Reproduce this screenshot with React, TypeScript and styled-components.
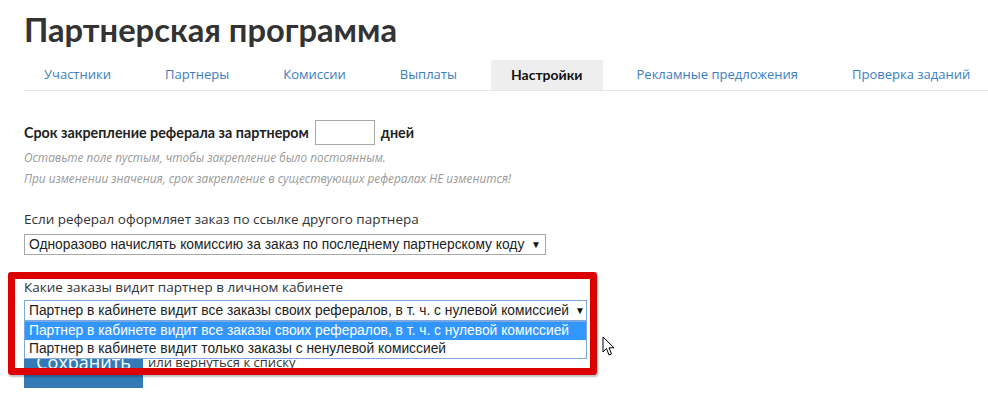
import React from 'react';
import styled, { createGlobalStyle } from 'styled-components';

const GlobalStyle = createGlobalStyle`
  html, body {
    margin: 0;
    padding: 0;
    background: #fff;
  }
  body {
    font-family: 'Open Sans', 'Liberation Sans', sans-serif;
    color: #333;
  }
`;

const Page = styled.div`
  position: relative;
  width: 988px;
  height: 405px;
  overflow: hidden;
  padding-left: 24px;
  box-sizing: border-box;
`;

const Title = styled.h1`
  margin: 0;
  padding-top: 11px;
  font-family: Lato, 'Open Sans', sans-serif;
  font-size: 32.7px;
  line-height: 38px;
  font-weight: 700;
  color: #333;
`;

const Tabs = styled.ul`
  display: flex;
  list-style: none;
  margin: 11px 0 0;
  padding: 0;
  border-bottom: 1px solid #e6e6e6;
`;

const Tab = styled.li<{ $active?: boolean }>`
  padding: 0 20px;
  margin-right: 14px;
  height: 30px;
  line-height: 29px;
  white-space: nowrap;
  color: ${p => (p.$active ? '#111' : '#3a7dbf')};
  font-family: ${p => (p.$active ? "Lato, 'Open Sans', sans-serif" : "'Open Sans', sans-serif")};
  font-weight: ${p => (p.$active ? 700 : 400)};
  font-size: ${p => (p.$active ? '14px' : '13px')};
  background: ${p => (p.$active ? '#eeeeee' : 'transparent')};
`;

const Form = styled.div`
  padding-top: 29px;
`;

const InlineRow = styled.div`
  display: flex;
  align-items: center;
  gap: 6px;
  font-family: Lato, 'Open Sans', sans-serif;
  font-size: 14.3px;
  font-weight: 700;
  color: #222;
`;

const DaysInput = styled.div`
  width: 60px;
  height: 25px;
  box-sizing: border-box;
  border: 1px solid #a9a9a9;
  background: #fff;
`;

const Hint = styled.p`
  margin: 0;
  font-size: 11.8px;
  font-style: italic;
  color: #999;
  line-height: 21px;
`;

const Hints = styled.div`
  margin-top: 2px;
`;

const Field = styled.div<{ $top: number }>`
  margin-top: ${p => p.$top}px;
`;

const Label = styled.div<{ $gap: number }>`
  font-size: 13.5px;
  line-height: 18px;
  color: #333;
  margin-bottom: ${p => p.$gap}px;
`;

const SelectBox = styled.div<{ $width: number; $focused?: boolean }>`
  position: relative;
  display: flex;
  align-items: center;
  justify-content: space-between;
  width: ${p => p.$width}px;
  height: 21px;
  box-sizing: border-box;
  padding: 0 4px;
  border: 1px solid ${p => (p.$focused ? '#7aa7e0' : '#a9a9a9')};
  background: #fff;
  font-family: 'Liberation Sans', Arial, sans-serif;
  font-size: 13.8px;
  color: #222;
  white-space: nowrap;
`;

const Arrow = styled.span`
  font-size: 10px;
  margin-left: 6px;
  color: #111;
`;

const OptionList = styled.div`
  position: absolute;
  left: -1px;
  right: -1px;
  top: 20px;
  z-index: 5;
  border: 1px solid #7aa7e0;
  background: #fff;
`;

const Option = styled.div<{ $selected?: boolean }>`
  height: 18px;
  line-height: 18px;
  padding: 0 4px;
  font-family: 'Liberation Sans', Arial, sans-serif;
  font-size: 13.8px;
  color: ${p => (p.$selected ? '#fff' : '#222')};
  background: ${p => (p.$selected ? '#3296ff' : '#fff')};
`;

const Actions = styled.div`
  display: flex;
  align-items: flex-start;
  gap: 5px;
  margin-top: 21px;
`;

const SaveButton = styled.button`
  width: 119px;
  height: 46px;
  border: none;
  background: #337ab7;
  color: #fff;
  font-family: 'Open Sans', sans-serif;
  font-size: 18px;
  line-height: 24px;
  padding: 8px 0 14px;
`;

const BackLink = styled.span`
  font-size: 13px;
  color: #333;
  line-height: 18px;
  padding-top: 11px;
`;

const Highlight = styled.div`
  position: absolute;
  left: 8px;
  top: 272px;
  width: 589px;
  height: 103px;
  box-sizing: border-box;
  border: 7px solid #dd0000;
  border-radius: 3px;
  box-shadow: 1px 2px 2px rgba(0, 0, 0, 0.25);
  z-index: 10;
  pointer-events: none;
`;

const Cursor = styled.svg`
  position: absolute;
  left: 602px;
  top: 336px;
  z-index: 11;
`;

const tabs = [
  'Участники',
  'Партнеры',
  'Комиссии',
  'Выплаты',
  'Настройки',
  'Рекламные предложения',
  'Проверка заданий',
];

export default function App() {
  return (
    <>
      <GlobalStyle />
      <Page>
        <Title>Партнерская программа</Title>
        <Tabs>
          {tabs.map(t => (
            <Tab key={t} $active={t === 'Настройки'}>
              {t}
            </Tab>
          ))}
        </Tabs>

        <Form>
          <InlineRow>
            Срок закрепление реферала за партнером
            <DaysInput />
            дней
          </InlineRow>
          <Hints>
            <Hint>Оставьте поле пустым, чтобы закрепление было постоянным.</Hint>
            <Hint>При изменении значения, срок закрепление в существующих рефералах НЕ изменится!</Hint>
          </Hints>

          <Field $top={21}>
            <Label $gap={6}>Если реферал оформляет заказ по ссылке другого партнера</Label>
            <SelectBox $width={522}>
              Одноразово начислять комиссию за заказ по последнему партнерскому коду
              <Arrow>▼</Arrow>
            </SelectBox>
          </Field>

          <Field $top={23}>
            <Label $gap={4}>Какие заказы видит партнер в личном кабинете</Label>
            <SelectBox $width={563} $focused>
              Партнер в кабинете видит все заказы своих рефералов, в т. ч. с нулевой комиссией
              <Arrow>▼</Arrow>
              <OptionList>
                <Option $selected>
                  Партнер в кабинете видит все заказы своих рефералов, в т. ч. с нулевой комиссией
                </Option>
                <Option>Партнер в кабинете видит только заказы с ненулевой комиссией</Option>
              </OptionList>
            </SelectBox>
          </Field>

          <Actions>
            <SaveButton>Сохранить</SaveButton>
            <BackLink>или вернуться к списку</BackLink>
          </Actions>
        </Form>

        <Highlight />
        <Cursor width="13" height="21" viewBox="0 0 13 21">
          <path
            d="M1 1 L1 16 L4.5 12.5 L7 19 L9.5 18 L7 11.8 L12 11.8 Z"
            fill="#fff"
            stroke="#000"
            strokeWidth="1"
            strokeLinejoin="miter"
          />
        </Cursor>
      </Page>
    </>
  );
}
